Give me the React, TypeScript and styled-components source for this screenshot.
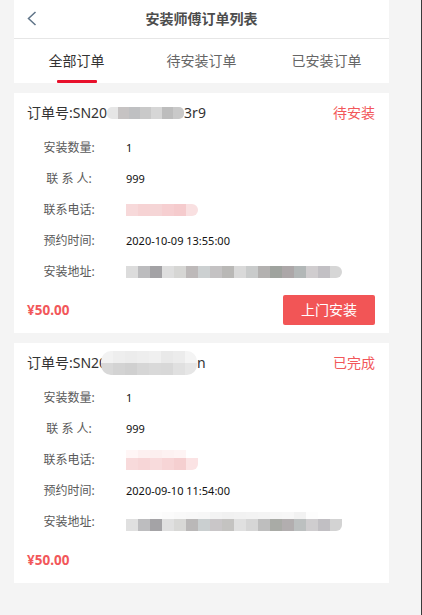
import React from "react";
import styled, { createGlobalStyle } from "styled-components";

const Global = createGlobalStyle`
  html, body { margin: 0; padding: 0; background: #f4f4f4; }
  body { font-family: "Noto Sans", "Noto Sans CJK SC", sans-serif; }
  * { box-sizing: border-box; }
`;

const Page = styled.div`
  width: 422px;
  min-height: 615px;
  border-right: 1px solid #3a3a3a;
  padding-left: 14px;
  background: #f4f4f4;
`;

const Column = styled.div`
  width: 375px;
  display: flex;
  flex-direction: column;
`;

const Header = styled.header`
  height: 39px;
  background: #fff;
  border-bottom: 1px solid #e6e6e6;
  display: flex;
  align-items: center;
  justify-content: center;
  position: relative;
`;

const Back = styled.button`
  position: absolute;
  left: 10px;
  top: 9px;
  width: 16px;
  height: 20px;
  padding: 0;
  border: 0;
  background: transparent;
  display: flex;
`;

const Title = styled.h1`
  margin: 0;
  font-size: 14px;
  font-weight: 700;
  color: #4d4d4d;
  line-height: 20px;
  padding-bottom: 1px;
`;

const Tabs = styled.nav`
  height: 44px;
  background: #fff;
  display: grid;
  grid-template-columns: repeat(3, 1fr);
`;

const Tab = styled.div<{ $active?: boolean }>`
  position: relative;
  display: flex;
  justify-content: center;
  padding-top: 12px;
  font-size: 14px;
  line-height: 20px;
  color: ${(p) => (p.$active ? "#333" : "#666")};
  &::after {
    content: "";
    display: ${(p) => (p.$active ? "block" : "none")};
    position: absolute;
    bottom: 0;
    left: 50%;
    margin-left: -20px;
    width: 40px;
    height: 3px;
    border-radius: 1px;
    background: #e8102b;
  }
`;

const List = styled.div`
  display: flex;
  flex-direction: column;
  gap: 10px;
  margin-top: 10px;
`;

const Card = styled.section`
  background: #fff;
  height: 240px;
  padding: 0 14px 0 13px;
  display: flex;
  flex-direction: column;
`;

const CardHead = styled.div`
  height: 39px;
  display: flex;
  align-items: center;
  justify-content: space-between;
  padding-top: 1px;
`;

const OrderNo = styled.div`
  display: flex;
  align-items: center;
  font-size: 14px;
  line-height: 20px;
  color: #333;
`;

const Status = styled.span`
  font-size: 14px;
  line-height: 20px;
  color: #f2575a;
`;

const Row = styled.div`
  height: 31px;
  display: flex;
  align-items: center;
`;

const Label = styled.span`
  width: 84px;
  text-align: center;
  font-size: 12px;
  line-height: 16px;
  color: #5a5a5a;
  white-space: pre;
`;

const Value = styled.span`
  margin-left: 15px;
  font-size: 11px;
  line-height: 16px;
  color: #111;
  display: flex;
  align-items: center;
`;

const Footer = styled.div`
  height: 46px;
  display: flex;
  align-items: center;
  justify-content: space-between;
`;

const Price = styled.span`
  font-size: 13.5px;
  font-weight: 700;
  color: #f2575a;
  line-height: 18px;
`;

const ActionButton = styled.button`
  width: 92px;
  height: 30px;
  border: 0;
  border-radius: 2px;
  background: #f25556;
  color: #fff;
  font-family: inherit;
  font-size: 14px;
  line-height: 20px;
  padding: 0;
`;

const Mosaic = styled.span<{ $radius: string; $shift?: number }>`
  display: inline-flex;
  flex-direction: column;
  border-radius: ${(p) => p.$radius};
  overflow: hidden;
  margin-left: ${(p) => p.$shift ?? 0}px;
`;

const MosaicRow = styled.span<{ $h: number }>`
  display: flex;
  height: ${(p) => p.$h}px;
`;

const Cell = styled.span<{ $c: string; $w: number }>`
  width: ${(p) => p.$w}px;
  background: ${(p) => p.$c};
`;

type MRow = { h: number; colors: string[] };

function Blur({ rows, w = 12, radius = "0 6px 6px 0", shift = 0 }: { rows: MRow[]; w?: number; radius?: string; shift?: number }) {
  return (
    <Mosaic $radius={radius} $shift={shift}>
      {rows.map((r, i) => (
        <MosaicRow key={i} $h={r.h}>
          {r.colors.map((c, j) => (
            <Cell key={j} $c={c} $w={w} />
          ))}
        </MosaicRow>
      ))}
    </Mosaic>
  );
}

const addr1 = [
  "#dcdcdc", "#bcbcbe", "#a3a2a5", "#dedede", "#d6d6d4", "#bdb9b9",
  "#ccd0d1", "#c4c2c3", "#b9b8b6", "#d9d9d9", "#c9cbcb", "#b3b1b0",
  "#9fa39e", "#aca7a8", "#b2b7b7", "#d0cdcf", "#c2c0c4", "#d6d6d6",
];
const addr2 = [
  "#e0e0e0", "#bdbdbf", "#a4a3a6", "#e0e0e0", "#d8d8d6", "#bab8b8",
  "#cacfd0", "#c9c6c8", "#c4c3c1", "#e0e0e0", "#d6d6d6", "#bebebe",
  "#a9aba6", "#b2aeaf", "#bcc0c0", "#cfcdcf", "#c1bfc3", "#d3d3d3",
];
const addr2Top = [
  "#ffffff", "#ffffff", "#fdfdfd", "#fbfbfb", "#f9f9f9", "#f8f8f8",
  "#f7f7f7", "#f3f3f3", "#f1f1f1", "#f2f2f2", "#f3f3f3", "#f4f4f4",
  "#f6f6f6", "#f7f7f7", "#f2f2f2", "#fdfdfd", "#ffffff", "#ffffff",
];

const orders = [
  {
    no: (
      <>
        SN20
        <Blur
          radius="5px"
          rows={[{ h: 12, colors: ["#e6e6e6", "#c6c3c3", "#bfc0c2", "#c9c9c9", "#d6d6d6", "#bdbdbd", "#c9c9c9"] }]}
          w={11}
        />
        3r9
      </>
    ),
    status: "待安装",
    qty: "1",
    contact: "999",
    phone: [{ h: 12, colors: ["#f7d9da", "#f6d3d4", "#f5d5d6", "#f6cfd1", "#f5cbcd", "#f9e0e1"] }],
    time: "2020-10-09 13:55:00",
    addr: [{ h: 12, colors: addr1 }],
    price: "¥50.00",
    action: "上门安装" as string | null,
  },
  {
    no: (
      <>
        SN20
        <Blur
          radius="10px"
          shift={-6}
          rows={[
            { h: 12, colors: ["#f2f2f2", "#eeeeee", "#ececec", "#eeeeee", "#f0f0f0", "#e9e9e9", "#ececec", "#f4f4f4"] },
            { h: 12, colors: ["#d8d8d8", "#d3d3d3", "#d0d0d0", "#d6d6d6", "#d9d9d9", "#d8d8d8", "#e0e0e0", "#e6e6e6"] },
          ]}
        />
        n
      </>
    ),
    status: "已完成",
    qty: "1",
    contact: "999",
    phone: [
      { h: 8, colors: ["#fff6f6", "#fdf0f0", "#fcefef", "#fdf2f2", "#fef4f4", "#ffffff"] },
      { h: 12, colors: ["#f8dadb", "#f7d6d7", "#f8dbdc", "#f7d5d6", "#f5cfd0", "#fbe3e4"] },
    ],
    time: "2020-09-10 11:54:00",
    addr: [
      { h: 7, colors: addr2Top },
      { h: 12, colors: addr2 },
    ],
    price: "¥50.00",
    action: null as string | null,
  },
];

export default function App() {
  return (
    <>
      <Global />
      <Page>
        <Column>
          <Header>
            <Back aria-label="返回">
              <svg width="16" height="20" viewBox="0 0 16 20">
                <polyline points="11.5,3 4.5,9.5 11.5,16" fill="none" stroke="#5f7488" strokeWidth="1.5" />
              </svg>
            </Back>
            <Title>安装师傅订单列表</Title>
          </Header>
          <Tabs>
            <Tab $active>全部订单</Tab>
            <Tab>待安装订单</Tab>
            <Tab>已安装订单</Tab>
          </Tabs>
          <List>
            {orders.map((o, i) => (
              <Card key={i}>
                <CardHead>
                  <OrderNo>订单号:{o.no}</OrderNo>
                  <Status>{o.status}</Status>
                </CardHead>
                <Row>
                  <Label>安装数量:</Label>
                  <Value>{o.qty}</Value>
                </Row>
                <Row>
                  <Label>{"联 系 人:"}</Label>
                  <Value>{o.contact}</Value>
                </Row>
                <Row>
                  <Label>联系电话:</Label>
                  <Value>
                    <Blur rows={o.phone} />
                  </Value>
                </Row>
                <Row>
                  <Label>预约时间:</Label>
                  <Value>{o.time}</Value>
                </Row>
                <Row>
                  <Label>安装地址:</Label>
                  <Value>
                    <Blur rows={o.addr} />
                  </Value>
                </Row>
                <Footer>
                  <Price>{o.price}</Price>
                  {o.action && <ActionButton>{o.action}</ActionButton>}
                </Footer>
              </Card>
            ))}
          </List>
        </Column>
      </Page>
    </>
  );
}
